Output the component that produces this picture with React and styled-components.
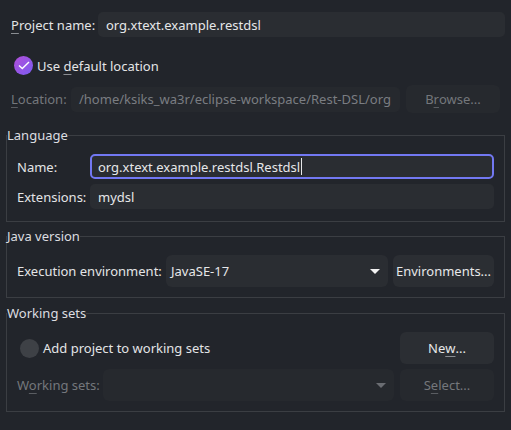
import React from "react";
import styled, { createGlobalStyle } from "styled-components";

const Global = createGlobalStyle`
  html, body { margin: 0; padding: 0; background: #22252b; }
  body { font-family: "Noto Sans", "Open Sans", sans-serif; font-size: 13px; color: #e3e4e6; }
  * { box-sizing: border-box; }
`;

const Page = styled.div`
  width: 511px;
  height: 430px;
  padding: 12px 6px 0 6px;
  display: flex;
  flex-direction: column;
  background: #22252b;
`;

const Row = styled.div`
  display: flex;
  align-items: center;
  gap: ${(p) => p.$gap ?? 0}px;
  margin-top: ${(p) => p.$mt ?? 0}px;
  padding-left: ${(p) => p.$pl ?? 0}px;
  padding-right: ${(p) => p.$pr ?? 0}px;
  height: ${(p) => (p.$h ? p.$h + "px" : "auto")};
`;

const Label = styled.span`
  width: ${(p) => (p.$w ? p.$w + "px" : "auto")};
  flex: none;
  white-space: nowrap;
  color: ${(p) => (p.$disabled ? "#74777c" : "#e3e4e6")};
  line-height: 18px;
`;

const M = styled.span`
  text-decoration: underline;
  text-underline-offset: 3px;
  text-decoration-color: ${(p) => (p.$disabled ? "#5a5d62" : "#8a8d92")};
`;

const Input = styled.div`
  flex: ${(p) => (p.$w ? "none" : "1")};
  width: ${(p) => (p.$w ? p.$w + "px" : "auto")};
  height: ${(p) => p.$h ?? 25}px;
  border-radius: 5px;
  background: ${(p) => (p.$disabled ? "#26292e" : "#2a2d32")};
  border: ${(p) => (p.$focus ? "2px solid #7278f2" : "none")};
  display: flex;
  align-items: center;
  padding-left: ${(p) => (p.$focus ? 6 : 8)}px;
  color: ${(p) => (p.$disabled ? "#7a7d82" : "#e6e7e9")};
  white-space: nowrap;
  overflow: hidden;
`;

const Caret = styled.span`
  display: inline-block;
  width: 1px;
  height: 17px;
  background: #e6e7e9;
  margin-left: 1px;
`;

const Button = styled.div`
  flex: none;
  width: ${(p) => p.$w}px;
  height: ${(p) => p.$h ?? 32}px;
  border-radius: 6px;
  background: ${(p) => (p.$disabled ? "#26292e" : "#2b2e33")};
  color: ${(p) => (p.$disabled ? "#74777c" : "#e6e7e9")};
  display: flex;
  align-items: center;
  justify-content: center;
  white-space: nowrap;
`;

const Combo = styled.div`
  flex: none;
  width: ${(p) => p.$w}px;
  height: 32px;
  border-radius: 6px;
  background: ${(p) => (p.$disabled ? "#26292e" : "#2a2d32")};
  color: #e6e7e9;
  display: flex;
  align-items: center;
  justify-content: space-between;
  padding: 0 8px 0 5px;
  white-space: nowrap;
`;

const Arrow = styled.span`
  width: 0;
  height: 0;
  border-left: 5px solid transparent;
  border-right: 5px solid transparent;
  border-top: 5px solid ${(p) => (p.$disabled ? "#6a6d72" : "#f2f2f2")};
`;

const Check = styled.span`
  width: 19px;
  height: 19px;
  flex: none;
  border-radius: 50%;
  background: ${(p) =>
    p.$checked ? "linear-gradient(135deg, #b34fd9 0%, #7a5cf2 100%)" : "#3e4146"};
  display: flex;
  align-items: center;
  justify-content: center;
`;

const Group = styled.fieldset`
  margin: ${(p) => p.$mt}px 0 0 0;
  padding: 10px 10px ${(p) => p.$pb ?? 10}px 10px;
  border: 1px solid #3b3e43;
  border-radius: 0;
  display: flex;
  flex-direction: column;
  gap: ${(p) => p.$gap ?? 5}px;
  min-width: 0;
`;

const Legend = styled.legend`
  padding: 0;
  margin-left: -10px;
  line-height: 18px;
  color: #dcdde0;
`;

export default function App() {
  return (
    <>
      <Global />
      <Page>
        <Row $pl={5} $h={25}>
          <Label $w={87}>
            <M>P</M>roject name:
          </Label>
          <Input>org.xtext.example.restdsl</Input>
        </Row>

        <Row $pl={8} $gap={4} $mt={19} $h={19}>
          <Check $checked>
            <svg width="12" height="9" viewBox="0 0 12 9">
              <path d="M1 4.5 L4.3 7.5 L11 1" fill="none" stroke="#fff" strokeWidth="1.4" />
            </svg>
          </Check>
          <Label>
            Use <M>d</M>efault location
          </Label>
        </Row>

        <Row $pl={5} $mt={10} $h={28} $gap={6}>
          <Label $w={54} $disabled>
            <M $disabled>L</M>ocation:
          </Label>
          <Input $w={329} $disabled>
            /home/ksiks_wa3r/eclipse-workspace/Rest-DSL/org
          </Input>
          <Button $w={94} $h={28} $disabled>
            B<M $disabled>r</M>owse...
          </Button>
        </Row>

        <Group $mt={13} $gap={5} $pb={12}>
          <Legend>Language</Legend>
          <Row>
            <Label $w={73}>Name:</Label>
            <Input $focus>
              org.xtext.example.restdsl.Restdsl
              <Caret />
            </Input>
          </Row>
          <Row>
            <Label $w={73}>Extensions:</Label>
            <Input>mydsl</Input>
          </Row>
        </Group>

        <Group $mt={5}>
          <Legend>Java version</Legend>
          <Row $gap={5}>
            <Label $w={144}>Execution environment:</Label>
            <Combo $w={222}>
              <span>JavaSE-17</span>
              <Arrow />
            </Combo>
            <Button $w={101}>Environments...</Button>
          </Row>
        </Group>

        <Group $mt={6}>
          <Legend>Working sets</Legend>
          <Row $pl={3} $gap={4}>
            <Check />
            <Label>
              Add project to working sets
            </Label>
            <span style={{ flex: 1 }} />
            <Button $w={94}>
              Ne<M>w</M>...
            </Button>
          </Row>
          <Row $gap={6}>
            <Label $w={80} $disabled>
              W<M $disabled>o</M>rking sets:
            </Label>
            <Combo $w={291} $disabled>
              <span />
              <Arrow $disabled />
            </Combo>
            <Button $w={94} $disabled>
              S<M $disabled>e</M>lect...
            </Button>
          </Row>
        </Group>
      </Page>
    </>
  );
}
